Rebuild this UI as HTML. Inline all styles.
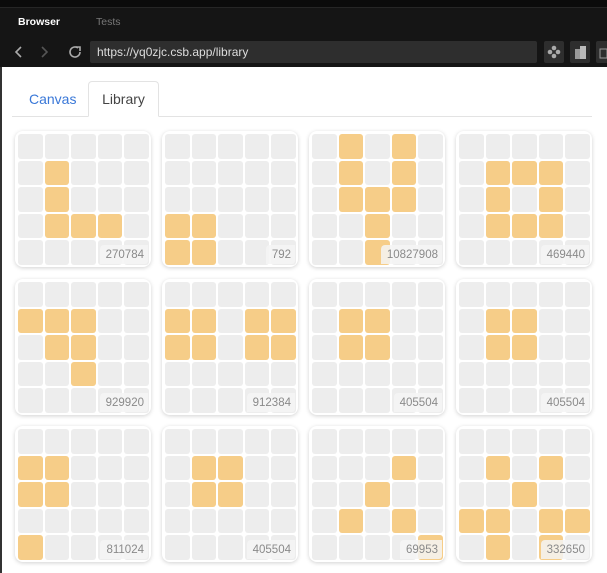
<html><head><style>
body{margin:0;width:607px;height:573px;overflow:hidden;background:#fff;font-family:"Liberation Sans",sans-serif;position:relative}
.top{position:absolute;left:0;top:0;width:607px;height:67px;background:#151515}
.top .b{position:absolute;top:0;left:0;width:607px;height:7px;background:#0b0b0b;border-bottom:1px solid #262626}
.t{position:absolute;top:16px;font-size:10.5px}
.url{position:absolute;left:90px;top:41px;width:447px;height:22px;background:#2e2e2e;border-radius:2px;color:#ddd;font-size:12px;line-height:22px;padding-left:7px;box-sizing:border-box}
.btn{position:absolute;top:41px;width:20px;height:22px;background:#2e2e2e;border-radius:2px}
.side{position:absolute;top:67px;left:0;width:2px;height:506px;background:#333}
.canvas{position:absolute;left:29px;top:91px;font-size:14px;color:#3a78d8}
.lib{position:absolute;left:88px;top:81px;width:71px;height:36px;border:1px solid #e3e3e3;border-bottom:1px solid #fff;border-radius:4px 4px 0 0;box-sizing:border-box;font-size:14px;color:#444;text-align:center;line-height:35px;background:#fff;z-index:2}
.line{position:absolute;left:12px;top:116px;width:580px;height:1px;background:#e3e3e3}
.card{position:absolute;width:136px;height:136px;background:#fff;border-radius:8px;box-shadow:0 1px 4px rgba(0,0,0,.18);box-sizing:border-box;padding:3px}
.g{display:grid;grid-template-columns:repeat(5,24.6px);grid-template-rows:repeat(5,24.6px);gap:2px}
.g i{background:#ededed;border-radius:3px}
.g i.o{background:#f6cd88}
.n{position:absolute;right:3px;bottom:3px;background:rgba(245,245,245,.85);color:#8a8a8a;font-size:11.5px;padding:4px 4px 3px 6px;border-radius:4px 0 3px 0}
</style></head><body>
<div class="top"><div class="b"></div>
<div class="t" style="left:18px;color:#fff;font-weight:bold">Browser</div>
<div class="t" style="left:96px;color:#777">Tests</div>
<svg style="position:absolute;left:10px;top:44px" width="80" height="16" fill="none" stroke-width="1.6"><path d="M11 3 6 8l5 5" stroke="#aaa"/><path d="M32 3l5 5-5 5" stroke="#555"/><path d="M68 4a5 5 0 1 0 2 4" stroke="#aaa"/><path d="M66 3h4v4" stroke="#aaa"/></svg>
<div class="url">https://yq0zjc.csb.app/library</div>
<div class="btn" style="left:544px"><svg width="20" height="22"><g fill="#aaa"><circle cx="10" cy="7" r="2.3"/><circle cx="6" cy="11" r="2.3"/><circle cx="14" cy="11" r="2.3"/><circle cx="10" cy="15" r="2.3"/></g></svg></div>
<div class="btn" style="left:570px"><svg width="20" height="22"><rect x="5" y="8" width="6" height="10" fill="#999"/><rect x="10" y="5" width="6" height="13" fill="#bbb"/></svg></div>
<div class="btn" style="left:596px"><svg width="20" height="22"><rect x="4" y="8" width="7" height="9" fill="none" stroke="#999"/></svg></div>
</div>
<div class="side"></div>
<div class="canvas">Canvas</div>
<div class="lib">Library</div>
<div class="line"></div>
<div id="c"></div>
<script>
var P=[["11 21 31 32 33","270784"],["30 31 40 41","792"],["01 03 11 13 21 22 23 32 42","10827908"],["11 12 13 21 23 31 32 33","469440"],
["10 11 12 21 22 32","929920"],["10 11 13 14 20 21 23 24","912384"],["11 12 21 22","405504"],["11 12 21 22","405504"],
["10 11 20 21 40","811024"],["11 12 21 22","405504"],["13 22 31 33 44","69953"],["11 13 22 30 31 33 34 41 43","332650"]];
var X=[15,162,309,456],Y=[131,279,426],h="";
P.forEach(function(p,k){var s=p[0].split(" "),c="";for(var r=0;r<5;r++)for(var q=0;q<5;q++)c+='<i'+(s.indexOf(""+r+q)>=0?' class="o"':'')+'></i>';
h+='<div class="card" style="left:'+X[k%4]+'px;top:'+Y[k/4|0]+'px"><div class="g">'+c+'</div><div class="n">'+p[1]+'</div></div>';});
document.getElementById("c").innerHTML=h;
</script>
</body></html>
